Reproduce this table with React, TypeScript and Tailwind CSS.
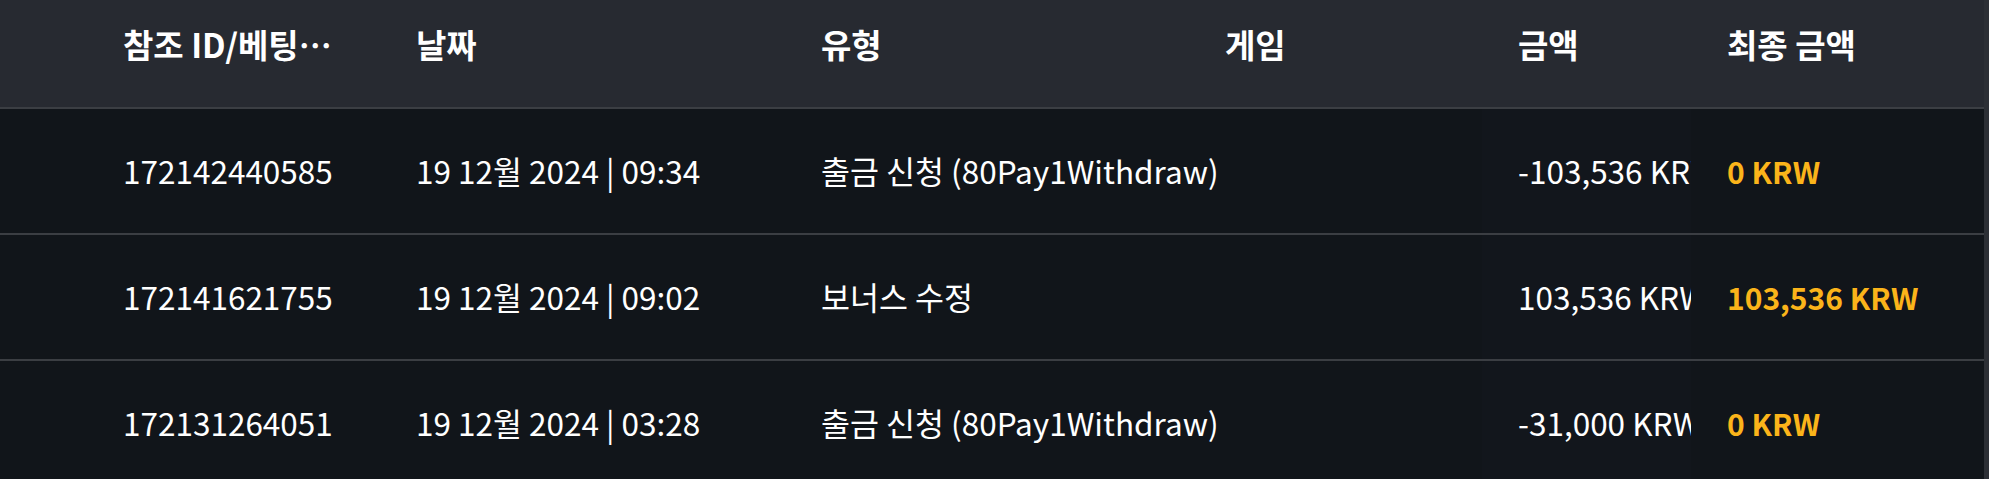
import React from "react";

const rows = [
  { id: "172142440585", date: "19 12월 2024 | 09:34", type: "출금 신청 (80Pay1Withdraw)", amount: "-103,536 KRW", final: "0 KRW" },
  { id: "172141621755", date: "19 12월 2024 | 09:02", type: "보너스 수정", amount: "103,536 KRW", final: "103,536 KRW" },
  { id: "172131264051", date: "19 12월 2024 | 03:28", type: "출금 신청 (80Pay1Withdraw)", amount: "-31,000 KRW", final: "0 KRW" },
];

const font = { fontFamily: '"Noto Sans CJK KR", "Noto Sans", sans-serif' };

export default function App() {
  return (
    <div className="flex w-full h-[479px] overflow-hidden bg-[#11151a]" style={font}>
      <div className="flex-1 flex flex-col">
        <div className="grid grid-cols-[87px_293px_405px_404px_293px_209px_1fr] h-[109px] shrink-0 items-center bg-[#272a31] border-b-2 border-[#3b3e43] pb-[17px] text-[33px] font-bold text-white leading-normal">
          <div />
          <div className="pl-[36px] whitespace-nowrap">참조 ID/베팅…</div>
          <div className="pl-[36px]">날짜</div>
          <div className="pl-[36px]">유형</div>
          <div className="pl-[36px]">게임</div>
          <div className="pl-[36px]">금액</div>
          <div className="pl-[36px] whitespace-nowrap">최종 금액</div>
        </div>
        {rows.map((r) => (
          <div
            key={r.id}
            className="grid grid-cols-[87px_293px_405px_404px_293px_209px_1fr] h-[126px] shrink-0 items-center border-b-2 border-[#3b3e43] text-[31.5px] text-white leading-normal"
          >
            <div />
            <div className="pl-[36px] whitespace-nowrap">{r.id}</div>
            <div className="pl-[36px] whitespace-nowrap">{r.date}</div>
            <div className="pl-[36px] whitespace-nowrap">{r.type}</div>
            <div />
            <div className="pl-[36px] whitespace-nowrap overflow-hidden h-full flex items-center bg-[#12161c]">{r.amount}</div>
            <div className="pl-[36px] whitespace-nowrap font-bold text-[30px] text-[#fbb41a]">{r.final}</div>
          </div>
        ))}
      </div>
      <div className="w-[5px] shrink-0 bg-[#2c2f35]" />
    </div>
  );
}
